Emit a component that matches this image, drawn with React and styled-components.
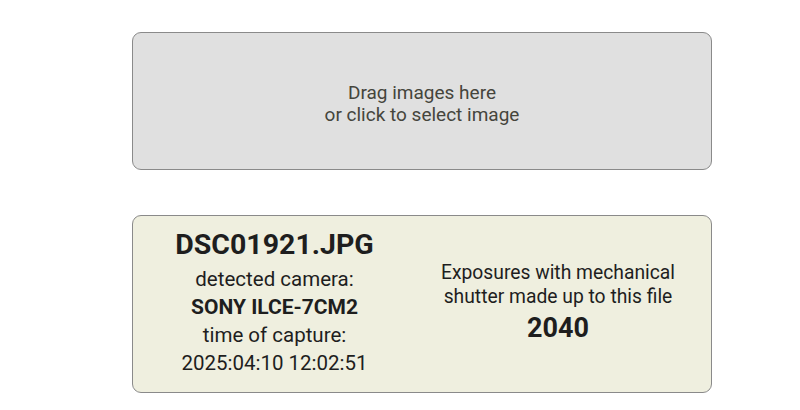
import React from "react";
import styled, { createGlobalStyle } from "styled-components";

const Global = createGlobalStyle`
  html, body { margin: 0; padding: 0; background: #ffffff; }
  body { font-family: Roboto, "Liberation Sans", sans-serif; }
`;

const Page = styled.main`
  display: flex;
  flex-direction: column;
  gap: 45px;
  padding: 32px 0 0 132px;
  width: 580px;
`;

const DropZone = styled.div`
  box-sizing: border-box;
  height: 138px;
  border: 1px solid #8a8a8a;
  border-radius: 9px;
  background: #e0e0e0;
  display: flex;
  flex-direction: column;
  align-items: center;
  justify-content: center;
  color: #45453c;
  font-size: 19px;
  line-height: 22px;
  text-align: center;
  padding-top: 6px;
  cursor: pointer;
`;

const ResultCard = styled.section`
  box-sizing: border-box;
  height: 178px;
  border: 1px solid #8a8a8a;
  border-radius: 9px;
  background: #efefdf;
  display: grid;
  grid-template-columns: 283px 284px;
  align-items: center;
  color: #1e1e1e;
  text-align: center;
`;

const Column = styled.div`
  display: flex;
  flex-direction: column;
  align-items: center;
  white-space: nowrap;
`;

const FileName = styled.div`
  font-size: 28.5px;
  font-weight: 700;
  line-height: 30px;
  margin-bottom: 5px;
  margin-top: -2px;
`;

const Line = styled.div`
  font-size: ${(p) => p.$size || 20.5}px;
  font-weight: ${(p) => (p.$bold ? 700 : 400)};
  line-height: ${(p) => p.$lh || 28}px;
`;

export default function App() {
  return (
    <>
      <Global />
      <Page>
        <DropZone>
          <div>Drag images here</div>
          <div>or click to select image</div>
        </DropZone>
        <ResultCard>
          <Column>
            <FileName>DSC01921.JPG</FileName>
            <Line>detected camera:</Line>
            <Line $bold $size={21}>SONY ILCE-7CM2</Line>
            <Line>time of capture:</Line>
            <Line>2025:04:10 12:02:51</Line>
          </Column>
          <Column>
            <Line $size={19.3} $lh={24}>Exposures with mechanical</Line>
            <Line $size={19.3} $lh={24}>shutter made up to this file</Line>
            <Line $bold $size={27} $lh={38}>2040</Line>
          </Column>
        </ResultCard>
      </Page>
    </>
  );
}
